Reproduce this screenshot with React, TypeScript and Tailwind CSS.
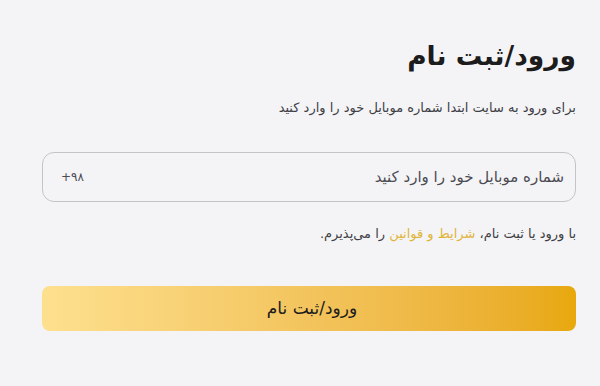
export default function App() {
  return (
    <div
      dir="rtl"
      className="w-[600px] h-[386px] bg-[#f4f4f6] px-[24px] pt-[36px]"
      style={{ fontFamily: '"DejaVu Sans", "Noto Sans", sans-serif' }}
    >
      <div className="mr-0 ml-[18px] flex flex-col">
        <h1 className="text-[26.5px] font-bold text-[#1c1c1c] leading-[40px]">ورود/ثبت نام</h1>
        <p className="mt-[22px] text-[13px] text-[#3f3f46] leading-[20px]">
          برای ورود به سایت ابتدا شماره موبایل خود را وارد کنید
        </p>
        <div className="mt-[34px] h-[50px] rounded-[12px] border border-[#c4c4c8] flex items-center justify-between pr-[11px] pl-[14px]">
          <span className="text-[15px] text-[#4b4b52]">شماره موبایل خود را وارد کنید</span>
          <span dir="ltr" className="text-[12px] text-[#4b4b52] ml-[4px]">+۹۸</span>
        </div>
        <p className="mt-[22px] text-[13px] text-[#3f3f46] leading-[20px]">
          با ورود یا ثبت نام، <span className="text-[#e0b43a]">شرایط و قوانین</span> را می‌پذیرم.
        </p>
        <button className="mt-[42px] h-[45px] rounded-[8px] bg-gradient-to-l from-[#e8a80a] to-[#fde08e] text-[17px] text-[#1c1c1c] pl-[6px]">
          ورود/ثبت نام
        </button>
      </div>
    </div>
  );
}
